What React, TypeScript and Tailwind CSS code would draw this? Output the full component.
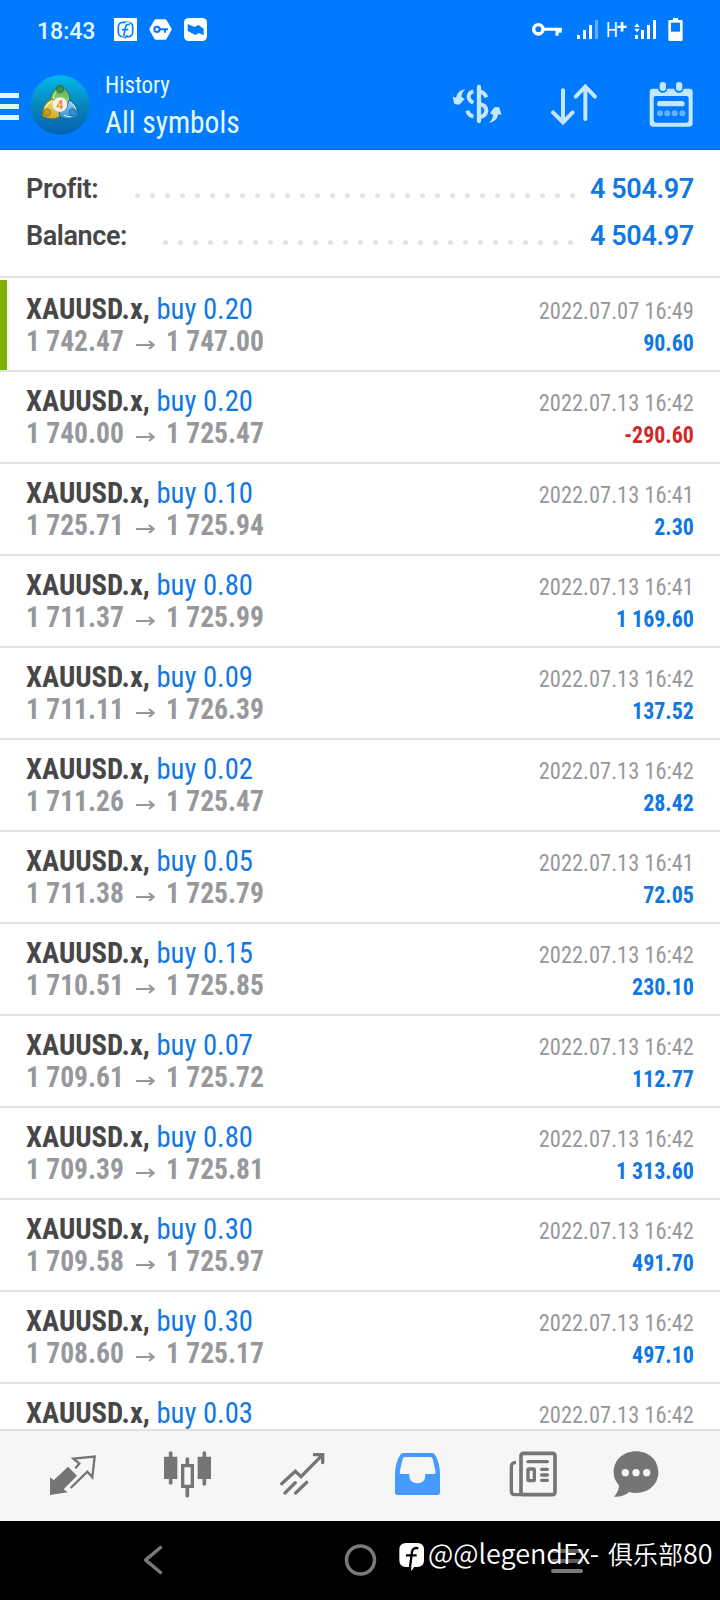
import type { ReactNode } from "react"

const trades = [
  { volume: "0.20", open: "1 742.47", close: "1 747.00", time: "2022.07.07 16:49", profit: "90.60" },
  { volume: "0.20", open: "1 740.00", close: "1 725.47", time: "2022.07.13 16:42", profit: "-290.60" },
  { volume: "0.10", open: "1 725.71", close: "1 725.94", time: "2022.07.13 16:41", profit: "2.30" },
  { volume: "0.80", open: "1 711.37", close: "1 725.99", time: "2022.07.13 16:41", profit: "1 169.60" },
  { volume: "0.09", open: "1 711.11", close: "1 726.39", time: "2022.07.13 16:42", profit: "137.52" },
  { volume: "0.02", open: "1 711.26", close: "1 725.47", time: "2022.07.13 16:42", profit: "28.42" },
  { volume: "0.05", open: "1 711.38", close: "1 725.79", time: "2022.07.13 16:41", profit: "72.05" },
  { volume: "0.15", open: "1 710.51", close: "1 725.85", time: "2022.07.13 16:42", profit: "230.10" },
  { volume: "0.07", open: "1 709.61", close: "1 725.72", time: "2022.07.13 16:42", profit: "112.77" },
  { volume: "0.80", open: "1 709.39", close: "1 725.81", time: "2022.07.13 16:42", profit: "1 313.60" },
  { volume: "0.30", open: "1 709.58", close: "1 725.97", time: "2022.07.13 16:42", profit: "491.70" },
  { volume: "0.30", open: "1 708.60", close: "1 725.17", time: "2022.07.13 16:42", profit: "497.10" },
  { volume: "0.03", open: "", close: "", time: "2022.07.13 16:42", profit: "" },
]

function StatusBar() {
  return (
    <div className="flex h-[60px] items-start pl-[37px] pt-[18px]">
      <span className="w-[77px] text-[23px] font-medium leading-[27px] font-['Roboto'] text-[#e2f8ff]">18:43</span>
      <svg className="h-[23px] w-[23px]" viewBox="342 54 69 69">
        <rect x="342" y="54" width="69" height="69" fill="#fff" />
        <rect x="355" y="67" width="43" height="43" rx="13" fill="none" stroke="#007aff" strokeWidth="5" />
        <path d="M372 106l3 12 8-12z" fill="#007aff" />
        <path d="M388 73q-10-3-12 7l-6 30M366 90h18" fill="none" stroke="#fff" strokeWidth="12" />
        <path d="M389 74q-10-3-12 6l-6 29M366 89h19" fill="none" stroke="#007aff" strokeWidth="5" />
      </svg>
      <svg className="ml-3 h-[23px] w-[23px]" viewBox="447 54 69 69">
        <path d="M468 58h27q3 0 5 3l14 24q2 3 0 6l-14 25q-2 3-5 3h-27q-3 0-5-3l-14-25q-2-3 0-6l14-24q2-3 5-3z" fill="#fff" />
        <circle cx="471" cy="88" r="8" fill="none" stroke="#007aff" strokeWidth="6" />
        <path d="M478 88h26M495 88v10" fill="none" stroke="#007aff" strokeWidth="6" />
      </svg>
      <svg className="ml-3 h-[23px] w-[23px]" viewBox="552 54 69 69">
        <rect x="552" y="54" width="69" height="69" rx="14" fill="#fff" />
        <path d="M563 72l21 9 11-6 16 11v20l-14-7-11 6-23-12z" fill="#007aff" />
      </svg>
      <svg className="ml-[325px] h-[23px] w-[30px]" viewBox="96 54 90 69">
        <circle cx="115" cy="88" r="14" fill="none" stroke="#fff" strokeWidth="10" />
        <path d="M132 88h54M171 86v21M180 86v12" fill="none" stroke="#fff" strokeWidth="9" />
      </svg>
      <svg className="ml-[15px] h-[23px] w-[22px]" viewBox="231 54 66 69" fill="#fff">
        <path d="M231 105h9v12h-9zM249 90h9v27h-9zM267 75h9v42h-9z" />
        <path d="M285 60h9v57h-9z" opacity=".4" />
      </svg>
      <span className="ml-[7px] flex w-[28px] font-['Roboto'] text-white">
        <span className="inline-block w-[11px] origin-left scale-x-[0.8] text-[21px] leading-[24px]">H</span>
        <span className="text-[18px] font-bold leading-[17px]">+</span>
      </span>
      <svg className="h-[23px] w-[23px]" viewBox="402 54 69 69" fill="#fff">
        <path d="M411 70l8 11h-16zM411 97l8-11h-16zM405 105h9v12h-9zM423 90h9v27h-9zM441 75h9v42h-9zM459 60h9v57h-9z" />
      </svg>
      <svg className="ml-[11px] h-[23px] w-[15px]" viewBox="504 54 45 69">
        <path d="M519 54h15v6h10q4 0 4 4v55q0 4-4 4h-35q-4 0-4-4v-55q0-4 4-4h10z" fill="#fff" />
        <path d="M513 68h27v27h-27z" fill="#007aff" />
      </svg>
    </div>
  )
}

function AppLogo() {
  return (
    <svg className="ml-[11px] mt-[15px] h-[60px] w-[60px]" viewBox="90 225 180 180">
      <defs>
        <linearGradient id="disc" x1="0" y1="0" x2="0" y2="1">
          <stop offset="0" stopColor="#00b9ee" />
          <stop offset=".5" stopColor="#0787bb" />
          <stop offset="1" stopColor="#0560b4" />
        </linearGradient>
        <linearGradient id="green" x1="0" y1="0" x2="0" y2="1">
          <stop offset="0" stopColor="#4fa350" />
          <stop offset="1" stopColor="#a5d878" />
        </linearGradient>
        <linearGradient id="gold" x1="0" y1="0" x2="0" y2="1">
          <stop offset="0" stopColor="#efe07c" />
          <stop offset="1" stopColor="#cda92a" />
        </linearGradient>
        <linearGradient id="blue" x1="0" y1="0" x2="0" y2="1">
          <stop offset="0" stopColor="#9ad8f2" />
          <stop offset="1" stopColor="#2b8fd4" />
        </linearGradient>
      </defs>
      <circle cx="180" cy="315" r="89" fill="url(#disc)" />
      <path d="M152 302q-1-31 28-46 31 15 30 46l-8 12h-42z" fill="url(#green)" stroke="#1d6a48" strokeWidth="2.500" />
      <path d="M160 300q1-22 14-30" fill="none" stroke="#e4f6d4" strokeWidth="3" />
      <path d="M154 298q-28 14-27 50 28 16 52 2l4-20-10-28z" fill="url(#gold)" stroke="#77691c" strokeWidth="2.500" />
      <path d="M134 330q3-18 18-24" fill="none" stroke="#fdf8d0" strokeWidth="3" />
      <path d="M207 300q29 18 27 48-28 17-53 3l-4-16 22-8z" fill="url(#blue)" stroke="#15598f" strokeWidth="2.500" />
      <path d="M228 330q-4-16-17-24M192 346q12 6 22 4" fill="none" stroke="#e6f7ff" strokeWidth="3" />
      <circle cx="180" cy="267" r="11" fill="#3f9147" stroke="#1f6234" strokeWidth="2" />
      <circle cx="141" cy="337" r="11" fill="#c19c24" stroke="#776010" strokeWidth="2" />
      <circle cx="218" cy="337" r="11" fill="#2f93d3" stroke="#14558c" strokeWidth="2" />
      <circle cx="180" cy="314" r="22" fill="#f5f1e8" />
      <text x="180" y="328" textAnchor="middle" fontFamily="Roboto" fontWeight="700" fontSize="38" fill="#f08c3c">4</text>
    </svg>
  )
}

function Header() {
  return (
    <header className="flex h-[90px] items-start border-b border-[#1f5fae]">
      <div className="mt-[33px] flex w-[19px] flex-col gap-[6px]">
        <span className="h-[5px] bg-[#dffaff]" />
        <span className="h-[5px] bg-[#dffaff]" />
        <span className="h-[5px] bg-[#dffaff]" />
      </div>
      <AppLogo />
      <div className="ml-[15px] mt-[10px] w-[345px] text-[#e6f9ff]">
        <div className="origin-left scale-x-[0.955] text-[24px] leading-[30px]">History</div>
        <div className="mt-[2px] origin-left scale-x-[0.92] text-[32px] leading-[40px]">All symbols</div>
      </div>
      <svg className="mt-[21px] h-12 w-[54px]" viewBox="60 63 162 144" fill="none" stroke="#c4e6ff" strokeWidth="12">
        <path d="M147 81v102" strokeWidth="13" strokeLinecap="round" />
        <path d="M130 94q-14 4-14 16 0 11 14 18M112 152q4 14 18 18" />
        <path d="M150 95q14 2 19 17M150 133q18 3 19 18-1 17-19 20" />
        <path d="M107 88q-13 8-12 23l9 6-16 17-15-2-5-22 10 3q6-24 29-25z" fill="#c4e6ff" stroke="none" />
        <path d="M176 188q13-8 13-23l-9-5 13-18 14-1 8 23-10-1q-5 24-29 25z" fill="#c4e6ff" stroke="none" />
      </svg>
      <svg className="ml-[45px] mt-[21px] h-12 w-[51px]" viewBox="357 63 153 144" fill="none" stroke="#c4e6ff" strokeWidth="12" strokeLinecap="round">
        <path d="M399 91v96M369 157l30 30 29-30" />
        <path d="M466 177V81M437 110l29-30 29 30" />
      </svg>
      <svg className="ml-[48px] mt-[21px] h-12 w-12" viewBox="654 63 144 144">
        <path d="M668 86h16q2 12 14 12t14-12h21q2 12 14 12t14-12h17q10 0 10 10v94q0 10-10 10H668q-9 0-9-10V96q0-10 9-10zM678 108q-7 0-7 7v66q0 7 7 7h91q7 0 7-7v-66q0-7-7-7z" fill="#c4e6ff" fillRule="evenodd" />
        <rect x="689" y="66" width="19" height="27" rx="9" fill="#c4e6ff" />
        <rect x="738" y="66" width="19" height="27" rx="9" fill="#c4e6ff" />
        <rect x="681" y="123" width="83" height="16" rx="8" fill="#c4e6ff" />
        <g fill="#66b3ff">
          <circle cx="690" cy="160" r="9" />
          <circle cx="712" cy="160" r="9" />
          <circle cx="734" cy="160" r="9" />
          <circle cx="757" cy="160" r="9" />
        </g>
      </svg>
    </header>
  )
}

function SummaryRow({ label, value, dots, className }: { label: string; value: string; dots: number; className: string }) {
  return (
    <div className="flex h-[47px] items-start justify-end font-['Roboto'] text-[27px] font-semibold leading-[33px] tracking-[-0.4px]">
      <span className="mr-auto text-[#474747]">{label}</span>
      <span className={`mt-[20px] flex gap-[10px] ${className}`}>
        {Array.from({ length: dots }, (_, i) => (
          <span key={i} className="h-[5px] w-[5px] rounded-full bg-[#e3e3e3]" />
        ))}
      </span>
      <span className="w-[104px] whitespace-nowrap text-[#1177e2]">{value}</span>
    </div>
  )
}

function TradeRow({ trade, first }: { trade: (typeof trades)[number]; first: boolean }) {
  const loss = trade.profit.startsWith("-")
  return (
    <div className="flex h-[92px] shrink-0 border-b-2 border-[#e2e2e2]">
      <div className={`w-[7px] ${first ? "bg-[#7fb100]" : ""}`} />
      <div className="flex flex-1 justify-between whitespace-nowrap pl-[19px] pr-[26px] pt-[13px]">
        <div className="text-[29px] leading-[32px]">
          <div className="origin-left scale-x-[0.988]">
            <span className="font-bold text-[#474747]">XAUUSD.x,</span>{" "}
            <span className="text-[#1177e2]">buy {trade.volume}</span>
          </div>
          <div className="flex font-bold text-[#97989c]">
            <span className="w-[110px] origin-left scale-x-[0.95]">{trade.open}</span>
            <svg className="mr-[11px] mt-[13px] h-[14px] w-[19px]" viewBox="0 0 19 14" fill="none" stroke="#97989c" strokeWidth="2.200">
              <path d="M0 7h17M13 3l4.500 4-4.500 4" />
            </svg>
            <span className="origin-left scale-x-[0.95]">{trade.close}</span>
          </div>
        </div>
        <div className="pt-[2px] text-right text-[24px] leading-[32px]">
          <div className="origin-right scale-x-[0.935] text-[#97989c]">{trade.time}</div>
          <div className={`origin-right scale-x-[0.915] font-bold ${loss ? "text-[#cf2a2a]" : "text-[#1177e2]"}`}>{trade.profit}</div>
        </div>
      </div>
    </div>
  )
}

function Tab({ box, className = "", children }: { box: string; className?: string; children: ReactNode }) {
  return (
    <svg className={`h-12 w-12 ${className}`} viewBox={box} fill="none" stroke="#757575">
      {children}
    </svg>
  )
}

function TabBar() {
  return (
    <nav className="flex h-[92px] shrink-0 gap-[67px] border-t-2 border-[#e2e2e2] bg-[#f6f6f6] pl-[49px] pt-[19px]">
      <Tab box="147 120 144 144">
        <path d="M150 202l11 9 43-41 27 27-40 41 12 9-53 8z" fill="#757575" stroke="none" />
        <path d="M226 175l12-14-18-15 64-6-7 62-15-17-50 49" strokeWidth="7" />
      </Tab>
      <Tab box="492 120 144 144">
        <path d="M492 140h40v67h-40zM593 140h40v67h-40z" fill="#757575" stroke="none" />
        <path d="M512 129v90M613 129v93M562 147v18M562 232v25" strokeWidth="11" strokeLinecap="round" />
        <path d="M548 167h29v62h-29z" strokeWidth="10" />
      </Tab>
      <Tab box="837 120 144 144">
        <path d="M845 221l41-37 17 16 63-64M943 134h25v24M855 249l31-31M887 249l33-32" strokeWidth="10" strokeLinecap="round" />
      </Tab>
      <Tab box="102 120 144 144">
        <path
          d="M130 129h86q6 0 9 5 15 25 15 59v54q0 8-8 8H113q-8 0-8-8v-54q0-34 16-59 3-5 9-5zM136 141q-6 0-8 5l-9 40q-1 6 5 6h24v4q0 24 24 24t24-24v-4h25q7 0 6-6l-9-40q-2-5-8-5z"
          fill="#439bff"
          fillRule="evenodd"
          stroke="none"
        />
      </Tab>
      <Tab box="447 120 144 144">
        <rect x="483" y="130" width="102" height="124" rx="7" strokeWidth="11" />
        <path d="M468 157q-14 1-14 13v74q0 10 10 10h24" strokeWidth="10" />
        <path d="M504 155h58M545 178h17M545 195h17M545 211h17" strokeWidth="10" strokeLinecap="round" />
        <rect x="504" y="177" width="19" height="35" rx="2" strokeWidth="10" />
      </Tab>
      <Tab box="756 120 144 144" className="-ml-3">
        <path d="M828 124c39 0 67 27 67 63 0 35-28 62-67 62q-11 0-20-3-17 15-46 14 15-15 15-34-16-16-16-39c0-36 28-63 67-63z" fill="#757575" stroke="none" />
        <g fill="#f6f6f6" stroke="none">
          <circle cx="796" cy="188" r="11" />
          <circle cx="828" cy="188" r="11" />
          <circle cx="860" cy="188" r="11" />
        </g>
      </Tab>
    </nav>
  )
}

function SystemNav() {
  return (
    <div className="relative flex h-[79px] shrink-0 items-start bg-black pl-[142px] pt-[22px]">
      <svg className="h-[34px] w-[22px]" viewBox="0 0 22 34" fill="none" stroke="#7a7a7a" strokeWidth="3.500" strokeLinecap="round" strokeLinejoin="round">
        <path d="M18.500 4.500L3.500 17l15 12.500" />
      </svg>
      <svg className="ml-[179px] h-[34px] w-[34px]" viewBox="0 0 34 34" fill="none" stroke="#7a7a7a" strokeWidth="3.500">
        <circle cx="17.500" cy="17" r="14" />
      </svg>
      <div className="ml-[174px] mt-[6px] flex w-[32px] flex-col gap-[6px]">
        <span className="h-1 rounded-full bg-[#5c5c5c]" />
        <span className="h-1 rounded-full bg-[#5c5c5c]" />
        <span className="h-1 rounded-full bg-[#7a7a7a]" />
      </div>
      {/* watermark lies over the system buttons */}
      <div className="absolute left-[399px] top-[15px] flex whitespace-nowrap text-white">
        <svg className="mt-[6px] h-[29px] w-[25px]" viewBox="117 396 75 87">
          <path d="M138 399h34q20 0 20 20v32q0 20-20 20h-10q-3 8-9 12l1-12h-16q-20 0-20-20v-32q0-20 20-20z" fill="#fff" />
          <path d="M175 415q-16-4-19 10l-6 46M138 436h32" fill="none" stroke="#000" strokeWidth="7" />
        </svg>
        <span className="ml-1 font-['Noto_Sans_CJK_SC',sans-serif] text-[27px] font-[350] leading-[34px]">
          <span className="mr-[3px]">@@legendFx- </span>
          <span className="text-[25px]">俱乐部</span>80
        </span>
      </div>
    </div>
  )
}

export default function App() {
  return (
    <div className="flex h-[1600px] w-[720px] flex-col overflow-hidden bg-white font-['Roboto_Condensed','Roboto',sans-serif]">
      <div className="shrink-0 bg-[#007aff]">
        <StatusBar />
        <Header />
      </div>
      <section className="mb-[2px] h-[128px] shrink-0 border-b-2 border-[#e2e2e2] pl-[26px] pr-[26px] pt-[23px]">
        <SummaryRow label="Profit:" value="4 504.97" dots={30} className="mr-[15px]" />
        <SummaryRow label="Balance:" value="4 504.97" dots={28} className="mr-[17px]" />
      </section>
      <main className="flex min-h-0 flex-1 flex-col overflow-hidden">
        {trades.map((trade, i) => (
          <TradeRow key={i} trade={trade} first={i === 0} />
        ))}
      </main>
      <TabBar />
      <SystemNav />
    </div>
  )
}
